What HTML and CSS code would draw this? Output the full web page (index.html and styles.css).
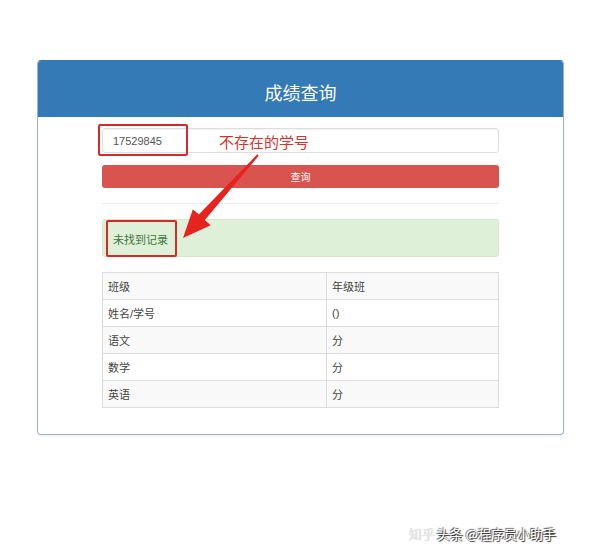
FILE: index.html
```html
<!DOCTYPE html>
<html lang="zh-CN">
<head>
    <meta charset="UTF-8">
    <meta name="viewport" content="width=device-width, initial-scale=1.0">
    <title>成绩查询</title>
    <link rel="stylesheet" href="styles.css">
</head>
<body>
    <div class="panel">
        <div class="panel-heading">成绩查询</div>
        <div class="panel-body">
            <div class="query-box">
                <input class="query-input" type="text" value="17529845">
                <button class="query-button">查询</button>
                <hr class="divider">
                <div class="alert">未找到记录</div>
                <table class="score-table">
                    <tr><td>班级</td><td>年级班</td></tr>
                    <tr><td>姓名/学号</td><td>()</td></tr>
                    <tr><td>语文</td><td>分</td></tr>
                    <tr><td>数学</td><td>分</td></tr>
                    <tr><td>英语</td><td>分</td></tr>
                </table>
            </div>
        </div>
    </div>

    <!-- annotations drawn over the screenshot -->
    <div class="mark mark-input"></div>
    <div class="mark mark-alert"></div>
    <div class="note">不存在的学号</div>
    <svg class="arrow" width="600" height="555" viewBox="0 0 600 555">
        <polygon points="257.3,154.3 198.8,214.5 192.9,209.2 183,238 210.7,225.2 204.8,219.9 258.7,155.7" fill="#e8221c"/>
    </svg>

    <div class="watermark">
        <span class="wm-zhihu">知乎</span>
        <span class="wm-toutiao">头条 @程序员小助手</span>
    </div>
</body>
</html>
```

FILE: styles.css
```css
body {
    margin: 0;
    background-color: #fff;
    font-family: "Liberation Sans", "Noto Sans CJK SC", sans-serif;
    color: #333;
    position: relative;
    height: 555px;
    overflow: hidden;
}

.panel {
    margin: 60px 36px 0 37px;
    border: 1px solid #337ab7;
    border-color: #337ab7 #9fb3c4 #9fb3c4 #9fb3c4;
    border-radius: 4px;
    box-shadow: 0 1px 2px rgba(0, 0, 0, 0.08);
}

.panel-heading {
    background-color: #337ab7;
    color: #fff;
    height: 56px;
    box-sizing: border-box;
    padding-top: 6px;
    display: flex;
    align-items: center;
    justify-content: center;
    font-size: 18px;
    border-radius: 3px 3px 0 0;
}

.panel-body {
    padding: 11px 0 26px;
}

.query-box {
    width: 397px;
    margin: 0 auto;
    display: flex;
    flex-direction: column;
}

.query-input {
    height: 25px;
    box-sizing: border-box;
    border: 1px solid #ddd;
    border-radius: 3px;
    padding: 0 10px;
    font-family: "Liberation Sans", sans-serif;
    font-size: 11px;
    color: #555;
    box-shadow: inset 0 1px 1px rgba(0, 0, 0, 0.05);
}

.query-button {
    margin-top: 12px;
    height: 23px;
    border: none;
    border-radius: 3px;
    background-color: #d9534f;
    color: #fff;
    font-family: "Noto Sans CJK SC", sans-serif;
    font-size: 10px;
}

.divider {
    margin: 15px 0 15px;
    border: 0;
    border-top: 1px solid #eee;
    width: 100%;
}

.alert {
    height: 38px;
    box-sizing: border-box;
    background-color: #dff0d8;
    border: 1px solid #d6e9c6;
    border-radius: 3px;
    color: #3c763d;
    font-size: 11px;
    padding-left: 10px;
    padding-top: 2px;
    display: flex;
    align-items: center;
}

.score-table {
    margin-top: 15px;
    border-collapse: collapse;
    width: 100%;
    font-size: 11px;
    color: #444;
}

.score-table td {
    border: 1px solid #ddd;
    height: 26px;
    padding: 0 5px;
}

.score-table td:first-child {
    width: 213px;
}

.score-table tr:nth-child(odd) td {
    background-color: #f9f9f9;
}

.mark {
    position: absolute;
    border: 2px solid #d42a2a;
    border-radius: 2px;
    box-sizing: border-box;
}

.mark-input {
    left: 98px;
    top: 124px;
    width: 90px;
    height: 32px;
}

.mark-alert {
    left: 106px;
    top: 220px;
    width: 71px;
    height: 37px;
}

.note {
    position: absolute;
    left: 219px;
    top: 131px;
    font-family: "Noto Sans CJK SC", sans-serif;
    font-size: 15px;
    color: #d4342e;
}

.arrow {
    position: absolute;
    left: 0;
    top: 0;
}

.watermark {
    position: absolute;
    right: 44px;
    top: 524px;
    font-family: "Noto Sans CJK SC", sans-serif;
    font-size: 13px;
    white-space: nowrap;
    display: flex;
    gap: 2px;
}

.wm-zhihu {
    color: #e8e8e8;
    text-shadow: 0 0 1px #bbb;
}

.wm-toutiao {
    color: #fff;
    text-shadow: 1px 1px 1px #222, -1px -1px 1px #555;
}
```
